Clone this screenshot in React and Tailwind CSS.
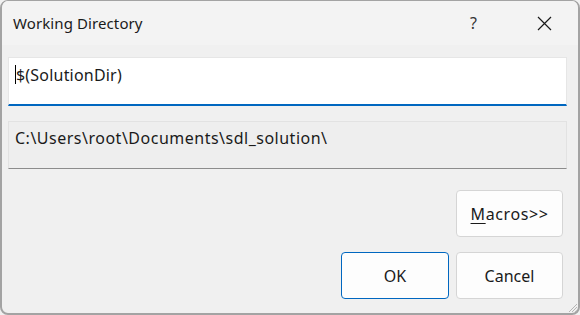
export default function App() {
  const font = { fontFamily: '"Noto Sans", "Open Sans", sans-serif' };

  return (
    <div className="w-[580px] h-[315px] bg-[#f0f0f0] text-[#1b1b1b]" style={font}>
      <div className="w-full h-full flex flex-col border-x-2 border-b-2 border-t border-[#a3a3a3] rounded-[8px] overflow-hidden relative">
        {/* title bar */}
        <div className="h-[44px] shrink-0 bg-[#f3f3f3] flex items-center">
          <span className="ml-[11px] text-[15px] leading-none tracking-[0.1px] text-[#1a1a1a]">Working Directory</span>
          <span className="ml-auto mr-[60px] text-[16px] leading-none text-[#333]">?</span>
          <svg className="mr-[26px]" width="15" height="15" viewBox="0 0 15 15">
            <path d="M1 1 L14 14 M14 1 L1 14" stroke="#1a1a1a" strokeWidth="1.2" fill="none" />
          </svg>
        </div>

        {/* body */}
        <div className="flex-1 flex flex-col pt-[12px] pl-[6px] pr-[11px]">
          <div className="h-[49px] bg-white border border-[#e6e6e6] border-b-2 border-b-[#0067c0] flex items-start pt-[6px] pl-[6px]">
            <span className="w-px h-[19px] bg-black mt-[1px]" />
            <span className="text-[16px] leading-[22px] tracking-[0.2px] text-[#1a1a1a]">$(SolutionDir)</span>
          </div>

          <div className="mt-[15px] h-[48px] bg-[#eeeeee] border border-[#e2e2e2] border-b-[#8c8c8c] pt-[4px] pl-[6px]">
            <span className="text-[16px] leading-[22px] tracking-[0.5px] text-[#1a1a1a]">C:\Users\root\Documents\sdl_solution\</span>
          </div>

          <div className="mt-[21px] flex justify-end pr-[4px]">
            <button className="w-[107px] h-[47px] bg-[#fdfdfd] border border-[#d5d5d5] rounded-[4px] text-[16px] tracking-[0.6px] text-[#1a1a1a]">
              <span className="underline underline-offset-[3px]">M</span>acros&gt;&gt;
            </button>
          </div>

          <div className="mt-[15px] flex justify-end gap-[7px] pr-[4px]">
            <button className="w-[108px] h-[47px] bg-[#fdfdfd] border border-[#0067c0] rounded-[4px] text-[16px] text-[#1a1a1a]">
              OK
            </button>
            <button className="w-[107px] h-[47px] bg-[#fdfdfd] border border-[#d5d5d5] rounded-[4px] text-[16px] text-[#1a1a1a]">
              Cancel
            </button>
          </div>
        </div>

        {/* resize grip */}
        <svg className="absolute right-0 bottom-0" width="12" height="12" viewBox="0 0 12 12">
          <path d="M11 3 L3 11 M11 6 L6 11 M11 9 L9 11" stroke="#b5b5b5" strokeWidth="1" fill="none" />
        </svg>
      </div>
    </div>
  );
}
